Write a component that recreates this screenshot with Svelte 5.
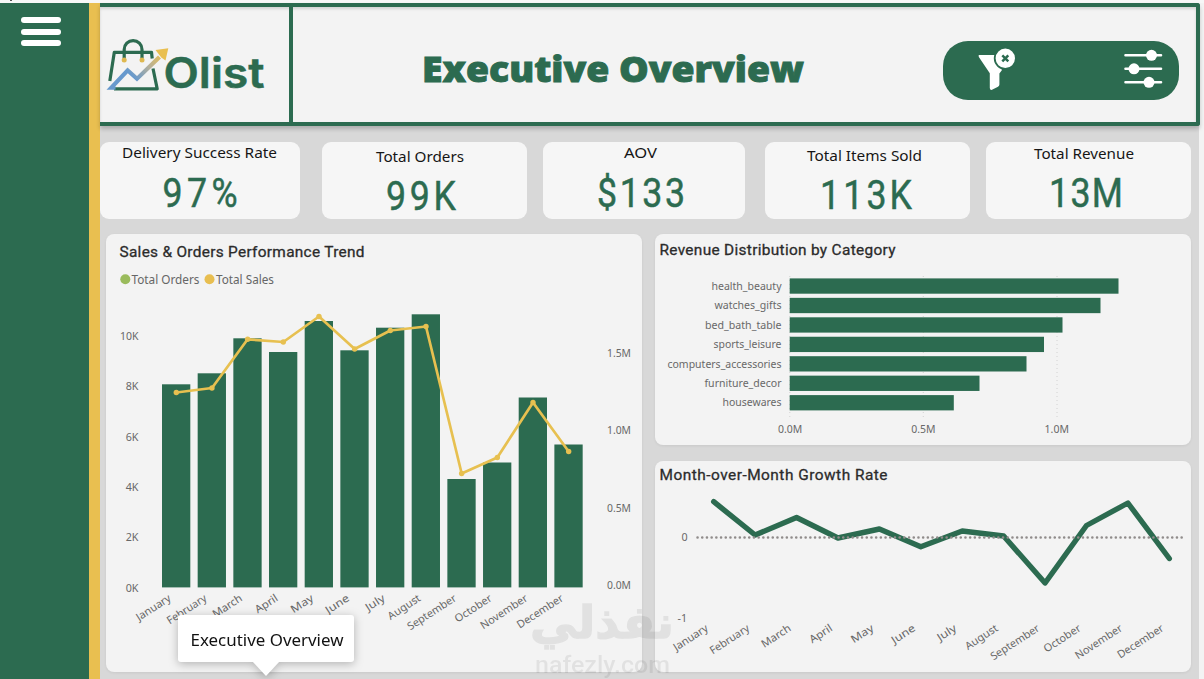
<script>
  const months = ['January', 'February', 'March', 'April', 'May', 'June', 'July', 'August', 'September', 'October', 'November', 'December'];
  const monthLengths = [39, 45, 33, 25, 25, 26, 21, 37, 56, 42, 54, 53];
  const kpis = [
    { label: 'Delivery Success Rate', value: '97%', x: 100, w: 200, lx: 122, lw: 155, ly: 158, vx: 162.5, vw: 75, vy: 207 },
    { label: 'Total Orders', value: '99K', x: 322, w: 205, lx: 376, lw: 88, ly: 162, vx: 386, vw: 70, vy: 210 },
    { label: 'AOV', value: '$133', x: 543, w: 202, lx: 624, lw: 33, ly: 158, vx: 597, vw: 88, vy: 207 },
    { label: 'Total Items Sold', value: '113K', x: 765, w: 205, lx: 807, lw: 115, ly: 161, vx: 820, vw: 92, vy: 209 },
    { label: 'Total Revenue', value: '13M', x: 986, w: 205, lx: 1034, lw: 100, ly: 159, vx: 1049, vw: 74, vy: 207 }
  ];
  const orderTops = [384.3, 373.3, 338.3, 352, 321, 350.3, 327.7, 314.3, 479, 462.5, 397.5, 444.5];
  const salesY = [392.5, 388, 339.3, 342, 316.5, 349, 330.5, 326.5, 473.5, 457.5, 402.5, 451.5];
  const growthY = [501.7, 535, 517.5, 538, 529, 546.7, 531, 536, 583, 525.5, 503, 558.5];
  const categories = [
    ['health_beauty', 1118.5, 70], ['watches_gifts', 1100.5, 67], ['bed_bath_table', 1062.5, 76.5],
    ['sports_leisure', 1044, 68], ['computers_accessories', 1026.5, 114], ['furniture_decor', 979.5, 77], ['housewares', 953.8, 59]
  ];
  const sx = (i) => 176.3 + 35.67 * i;
  const gx = (i) => 713.7 + 41.42 * i;
  const salesPoints = salesY.map((y, i) => `${sx(i)},${y}`).join(' ');
  const growthPoints = growthY.map((y, i) => `${gx(i)},${y}`).join(' ');
</script>

<div class="page">
  <div class="topline"><i></i></div>
  <aside>
    <div class="burger"><i></i><i></i><i></i></div>
  </aside>
  <main>
    <header>
      <div class="brand">
        <svg width="185" height="115" viewBox="104 7 185 115">
          <defs>
            <linearGradient id="trend" gradientUnits="userSpaceOnUse" x1="134" y1="78" x2="161" y2="53">
              <stop offset="0" stop-color="#6799cd" /><stop offset=".5" stop-color="#b4b09c" /><stop offset="1" stop-color="#e9bf50" />
            </linearGradient>
          </defs>
          <g fill="none" stroke="#2c6b50" stroke-width="3.2" stroke-linejoin="round">
            <path d="M109.8 81 114.3 52.3H151.5L152.2 58.5" />
            <path d="M153 68.5 157.2 88.9H114" />
            <path d="M124.2 58.5V49.5a8.9 8.9 0 0 1 17.8 0v9" />
          </g>
          <circle cx="124.2" cy="60" r="2.5" fill="#dfb84f" /><circle cx="142" cy="60" r="2.5" fill="#dfb84f" />
          <path d="M106.5 89.8 127.5 67.5 137 76 158 55.5 161 58.5 137 81.5 127.8 73.3 115.5 86.2V89.8Z" fill="url(#trend)" />
          <path d="M155.5 50 168.3 48.2 165.5 60.5 161.3 57.5 158.8 54.2Z" fill="#e9bf50" />
          <text x="163.5" y="87.5" class="logo" textLength="101" lengthAdjust="spacingAndGlyphs">Olist</text>
        </svg>
      </div>
      <div class="heading">
        <svg width="400" height="60" viewBox="414 40 400 60">
          <text x="422" y="82.2" class="display" textLength="382" lengthAdjust="spacingAndGlyphs">Executive Overview</text>
        </svg>
      </div>
      <div class="tools">
        <svg width="236" height="59" viewBox="943 41 236 59" fill="#fff">
          <path d="M979 55H995L1002 70 999.4 73.5V84.5Q999.4 86 998 86.8L991.5 90Q989.8 90 989.8 88V73.3L979 57.2Q978 55.4 979 55Z" />
          <circle cx="1005.3" cy="58.3" r="10.6" stroke="#2c6b50" stroke-width="1.8" />
          <path d="M1002.3 55.3 1008.3 61.3M1008.3 55.3 1002.3 61.3" stroke="#2c6b50" stroke-width="2.5" />
          <path d="M1125.5 55.3H1161M1125.5 68.8H1161M1125.5 82.3H1161" stroke="#fff" stroke-width="2.6" stroke-linecap="round" />
          <circle cx="1151.5" cy="55.3" r="5.5" /><circle cx="1134" cy="68.8" r="5.5" /><circle cx="1149" cy="82.3" r="5.5" />
        </svg>
      </div>
    </header>

    <section class="kpis">
      {#each kpis as k}
        <article>
          <svg width={k.w} height="77" viewBox="{k.x} 142 {k.w} 77">
            <text class="label" x={k.lx} y={k.ly} textLength={k.lw} lengthAdjust="spacingAndGlyphs">{k.label}</text>
            <text class="value" transform="translate({k.vx} {k.vy}) scale(.87 1)" textLength={k.vw / 0.87}>{k.value}</text>
          </svg>
        </article>
      {/each}
    </section>

    <section class="panels">
      <article class="panel">
        <svg width="536" height="438" viewBox="106 234 536 438">
          <text class="title" x="119.5" y="257" textLength="245">Sales &amp; Orders Performance Trend</text>
          <circle cx="125.3" cy="279.3" r="5" fill="#9abb5c" />
          <text class="legend" x="131.5" y="284" textLength="68" lengthAdjust="spacingAndGlyphs">Total Orders</text>
          <circle cx="209.5" cy="279.3" r="5" fill="#e8be50" />
          <text class="legend" x="216" y="284" textLength="58" lengthAdjust="spacingAndGlyphs">Total Sales</text>
          {#each ['10K', '8K', '6K', '4K', '2K', '0K'] as t, i}
            <text class="axis" x="138.5" y={340 + i * 50.3} text-anchor="end" textLength={i ? 12.8 : 18.5} lengthAdjust="spacingAndGlyphs">{t}</text>
          {/each}
          {#each ['1.5M', '1.0M', '0.5M', '0.0M'] as t, i}
            <text class="axis" x="607" y={357 + i * 77.4} textLength="24" lengthAdjust="spacingAndGlyphs">{t}</text>
          {/each}
          {#each orderTops as y, i}
            <rect x={162 + 35.67 * i} {y} width="28.3" height={587.4 - y} fill="#2c6b50" />
            <text class="axis" transform="translate({sx(i) - 4.5} 600) rotate(-33)" text-anchor="end" textLength={monthLengths[i]} lengthAdjust="spacingAndGlyphs">{months[i]}</text>
          {/each}
          <polyline points={salesPoints} fill="none" stroke="#e7c050" stroke-width="2.7" stroke-linejoin="round" />
          {#each salesY as y, i}<circle cx={sx(i)} cy={y} r="2.7" fill="#e7c050" />{/each}
        </svg>
      </article>

      <div class="stack">
        <article class="panel">
          <svg width="536" height="211" viewBox="655 234 536 211">
            <text class="title" x="659.5" y="255" textLength="236">Revenue Distribution by Category</text>
            <path d="M789.8 276V420M923.3 276V420M1057 276V420" stroke="#d2d2d2" stroke-dasharray="1 3" />
            {#each categories as [name, end, len], i}
              <text class="axis" x="781.5" y={290 + i * 19.4} text-anchor="end" textLength={len} lengthAdjust="spacingAndGlyphs">{name}</text>
              <rect x="789.7" y={278.4 + i * 19.45} width={end - 789.7} height="15.3" fill="#2c6b50" />
            {/each}
            {#each ['0.0M', '0.5M', '1.0M'] as t, i}
              <text class="axis" x={778 + i * 133.3} y="433" textLength="24.3" lengthAdjust="spacingAndGlyphs">{t}</text>
            {/each}
          </svg>
        </article>
        <article class="panel">
          <svg width="536" height="211" viewBox="655 461 536 211">
            <text class="title" x="659.5" y="480" textLength="228">Month-over-Month Growth Rate</text>
            <text class="axis" x="681.5" y="541">0</text>
            <text class="axis" x="677.5" y="622" textLength="9.5">-1</text>
            <polyline points={growthPoints} fill="none" stroke="#2c6b50" stroke-width="5.4" stroke-linejoin="round" stroke-linecap="round" />
            <path d="M697.5 537.4H1184" stroke="#908c8b" stroke-width="2.5" stroke-linecap="round" stroke-dasharray="0.1 4.6" />
            {#each months as m, i}
              <text class="axis" transform="translate({gx(i) - 4.7} 630) rotate(-33)" text-anchor="end" textLength={monthLengths[i]} lengthAdjust="spacingAndGlyphs">{m}</text>
            {/each}
          </svg>
        </article>
      </div>
    </section>
  </main>

  <svg class="watermark" width="160" height="83" viewBox="522 596 160 83">
    <text class="arabic" x="530" y="638" textLength="144" lengthAdjust="spacingAndGlyphs">نفذلي</text>
    <text class="domain" x="535" y="672.5" textLength="135" lengthAdjust="spacingAndGlyphs">nafezly.com</text>
  </svg>

  <div class="tooltip">
    <svg width="176" height="47" viewBox="178 615 176 47"><text x="190.5" y="646" textLength="153" lengthAdjust="spacingAndGlyphs">Executive Overview</text></svg>
  </div>
</div>

<style>
  :global(body) { margin: 0; overflow: hidden; }
  .page {
    position: relative; width: 1204px; height: 679px; overflow: hidden; box-sizing: border-box;
    display: grid; grid-template: 3px 676px / 100px 1104px; background: #f3f3f3;
    font-family: "Noto Sans", "Open Sans", sans-serif;
  }
  svg { display: block; }
  .topline { grid-column: 1 / 3; background: #f7f7f7; padding-left: 10px; }
  .topline i { display: block; width: 2px; height: 1px; background: #555; }
  aside { box-sizing: border-box; background: #2c6b50; border-right: 11px solid #e9bf50; padding: 14px 0 0 21px; }
  .burger { display: grid; gap: 5.7px; }
  .burger i { width: 40px; height: 6px; border-radius: 3px; background: #fff; }
  main { width: 1099px; background: #d8d8d8; }
  header {
    position: relative; box-sizing: border-box; width: 1100px; height: 123px; display: flex; align-items: center;
    border: 4px solid #2c6b50; border-left: 0; background: #f3f3f3; border-radius: 0 3px 3px 0;
    box-shadow: 0 3px 4px #0003, inset 0 2px 3px #0002;
  }
  .brand { flex: none; box-sizing: border-box; width: 193px; height: 115px; padding-left: 4px; border-right: 4px solid #2c6b50; }
  .heading { width: 650px; display: flex; justify-content: center; margin: 11px 0 0 -4px; }
  .tools { flex: none; margin-left: 4px; margin-top: 12px; width: 236px; height: 59px; border-radius: 25px; background: #2c6b50; }
  .kpis { display: flex; padding-top: 16px; }
  .kpis article { height: 77px; border-radius: 9px; background: #f6f6f6; margin-left: 16px; }
  .kpis article:first-child { margin-left: 0; }
  .kpis article:nth-child(2) { margin-left: 22px; }
  .kpis article:nth-child(4) { margin-left: 20px; }
  .panels { display: flex; gap: 13px; padding: 15px 0 0 6px; }
  .stack { display: grid; gap: 16px; }
  .panel { border-radius: 8px; background: #f3f3f3; box-shadow: 0 1px 3px #0001; }
  .logo { font: 600 42px Inter, sans-serif; fill: #2c6b50; stroke: #2c6b50; stroke-width: .5; }
  .display { font: 800 35px "Open Sans", sans-serif; fill: #2c6b50; stroke: #2c6b50; stroke-width: .9; }
  .label { font-size: 15.2px; fill: #161616; }
  .value { font: 400 41px Roboto, sans-serif; fill: #2c6b50; stroke: #2c6b50; stroke-width: .5; }
  .title { font: 400 15.4px Roboto, sans-serif; fill: #2b2b2b; stroke: #2b2b2b; stroke-width: .3; }
  .legend { font-size: 12.3px; fill: #666; }
  .axis { font-size: 10.7px; fill: #686868; }
  .watermark { position: absolute; left: 522px; top: 596px; opacity: .065; }
  .arabic { font: 700 45px "DejaVu Sans", sans-serif; stroke: #000; stroke-width: 1.5; }
  .domain { font: 500 24px Roboto, sans-serif; }
  .tooltip {
    position: absolute; left: 178px; top: 615px; width: 176px; height: 47px; border-radius: 3px;
    background: #fff; filter: drop-shadow(0 2px 5px #0004);
  }
  .tooltip text { font-size: 17px; fill: #111; }
  .tooltip::after {
    content: ""; position: absolute; left: 74px; top: 46px;
    border: 14px solid transparent; border-top: 15px solid #fff; border-bottom: 0;
  }
</style>
